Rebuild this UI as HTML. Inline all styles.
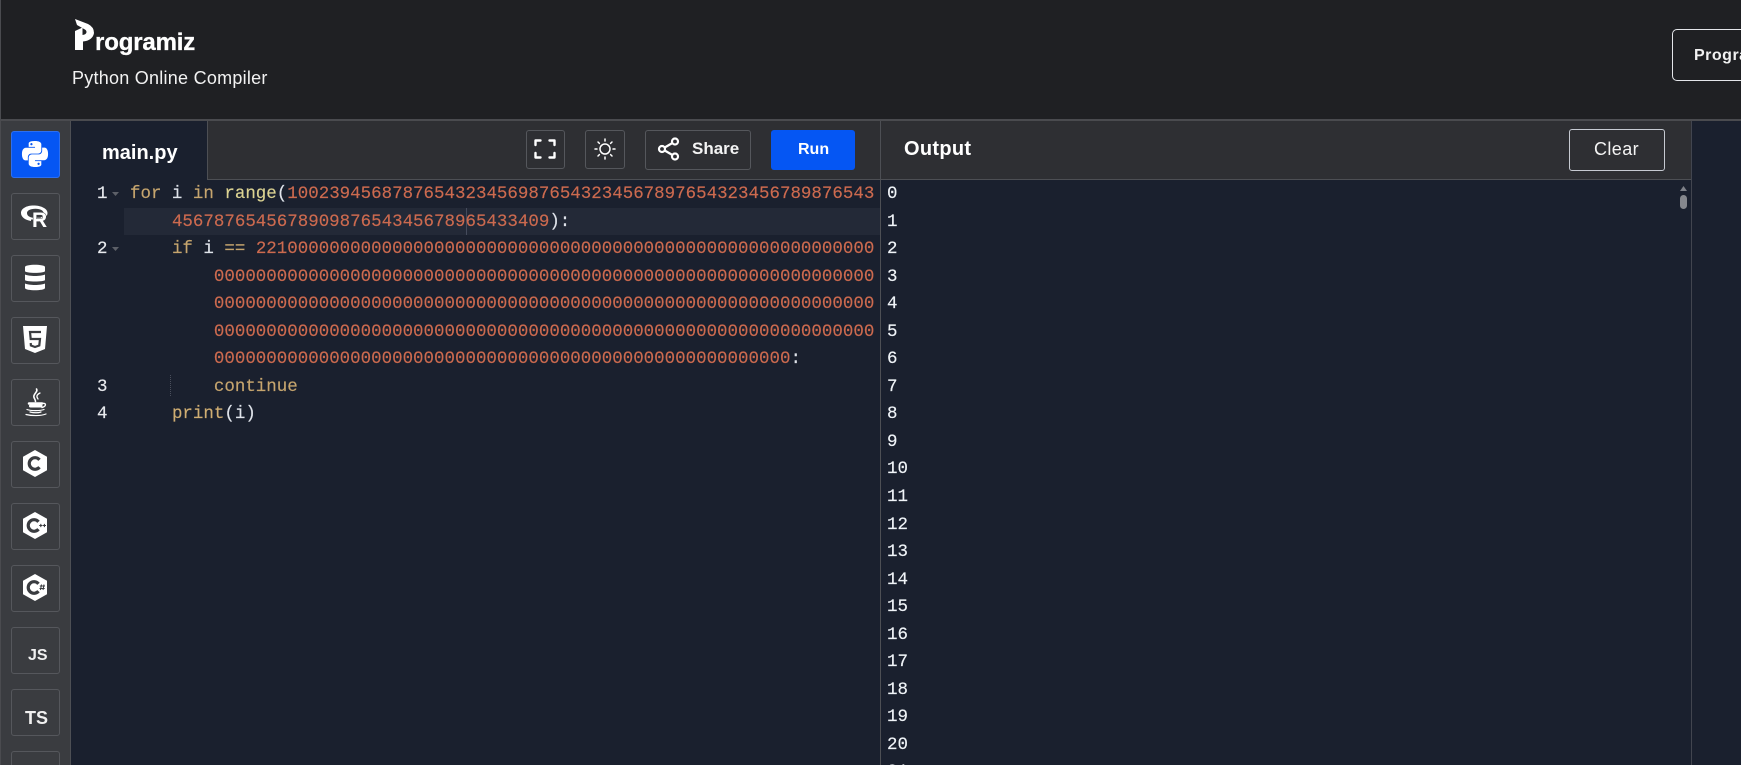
<!DOCTYPE html>
<html lang="en"><head><meta charset="utf-8"><title>Python Online Compiler</title>
<style>
html,body{margin:0;padding:0;width:1741px;height:765px;overflow:hidden;background:#1a202e}
*{box-sizing:border-box}
body{position:relative;font-family:"Liberation Sans",sans-serif;color:#fff}
.a{position:absolute}
.t{position:absolute;white-space:pre}
.tile{position:absolute;left:11px;width:49px;height:47px;border:1px solid #55575c;border-radius:3px}
.btn{position:absolute;border:1px solid #55575c;border-radius:3px}
pre{margin:0;position:absolute;font-family:"Liberation Mono",monospace;font-size:17.48px;line-height:27.55px;white-space:pre;-webkit-text-stroke:.15px}
.k{color:#c6a56e}.f{color:#dcd392}.n{color:#cc6a4f}.w{color:#dfe3ea}.p{color:#cfad72}
svg{position:absolute;overflow:visible}
</style></head><body>

<!-- header -->
<div class="a" style="left:0;top:0;width:1741px;height:119px;background:#1f2023"></div>
<div class="a" style="left:0;top:119px;width:1741px;height:2px;background:#4a4b4f"></div>
<div class="a" style="left:0;top:0;width:1px;height:765px;background:#4a4b4f"></div>
<svg style="left:0;top:0" width="100" height="60"><path fill="#fff" d="M75 19L88 24Q94 27 94 33Q93 39 86 41L83 41.500V50H75V31L82.500 27.500V35Q86.500 34.500 86.500 32Q86.500 30 84 29L77 25Z"/></svg>
<div class="t" style="left:95px;top:26px;font-size:24px;font-weight:bold;line-height:34px;letter-spacing:-.15px;-webkit-text-stroke:.3px #fff">rogramiz</div>
<div class="t" style="left:72px;top:67px;font-size:18px;line-height:22px;letter-spacing:.25px;color:#f2f2f2">Python Online Compiler</div>
<div class="a" style="left:1672px;top:29px;width:90px;height:52px;border:1px solid #e4e6ea;border-radius:5px"></div>
<div class="t" style="left:1694px;top:46px;font-size:16px;font-weight:bold;line-height:20px;letter-spacing:.5px;color:#f2f2f2">Programiz PRO</div>

<!-- sidebar -->
<div class="a" style="left:1px;top:121px;width:70px;height:644px;background:#3a3c40;border-right:1px solid #4d4f54"></div>
<div class="tile" style="top:131px;background:#0556f3;border-color:#2d6ff0"></div>
<div class="tile" style="top:193px"></div>
<div class="tile" style="top:255px"></div>
<div class="tile" style="top:317px"></div>
<div class="tile" style="top:379px"></div>
<div class="tile" style="top:441px"></div>
<div class="tile" style="top:503px"></div>
<div class="tile" style="top:565px"></div>
<div class="tile" style="top:627px"></div>
<div class="tile" style="top:689px"></div>
<div class="tile" style="top:751px"></div>

<!-- python -->
<svg style="left:22px;top:141px" width="26" height="26" viewBox="0 0 24 24" preserveAspectRatio="none"><path fill="#fff" fill-rule="evenodd" d="M14.25.18l.9.2.73.26.59.3.45.32.34.34.25.34.16.33.1.3.04.26.02.2-.01.13V8.5l-.05.63-.13.55-.21.46-.26.38-.3.31-.33.25-.35.19-.35.14-.33.1-.3.07-.26.04-.21.02H8.77l-.69.05-.59.14-.5.22-.41.27-.33.32-.27.35-.2.36-.15.37-.1.35-.07.32-.04.27-.02.21v3.06H3.17l-.21-.03-.28-.07-.32-.12-.35-.18-.36-.26-.36-.36-.35-.46-.32-.59-.28-.73-.21-.88-.14-1.05-.05-1.23.06-1.22.16-1.04.24-.87.32-.71.36-.57.4-.44.42-.33.42-.24.4-.16.36-.1.32-.05.24-.01h.16l.06.01h8.16v-.83H6.18l-.01-2.75-.02-.37.05-.34.11-.31.17-.28.25-.26.31-.23.38-.2.44-.18.51-.15.58-.12.64-.1.71-.06.77-.04.84-.02 1.27.05zm-6.3 1.98l-.23.33-.08.41.08.41.23.34.33.22.41.09.41-.09.33-.22.23-.34.08-.41-.08-.41-.23-.33-.33-.22-.41-.09-.41.09zm13.09 3.95l.28.06.32.12.35.18.36.27.36.35.35.47.32.59.28.73.21.88.14 1.04.05 1.23-.06 1.23-.16 1.04-.24.86-.32.71-.36.57-.4.45-.42.33-.42.24-.4.16-.36.09-.32.05-.24.02-.16-.01h-8.22v.82h5.84l.01 2.76.02.36-.05.34-.11.31-.17.29-.25.25-.31.24-.38.2-.44.17-.51.15-.58.13-.64.09-.71.07-.77.04-.84.01-1.27-.04-1.07-.14-.9-.2-.73-.25-.59-.3-.45-.33-.34-.34-.25-.34-.16-.33-.1-.3-.04-.25-.02-.2.01-.13v-5.34l.05-.64.13-.54.21-.46.26-.38.3-.32.33-.24.35-.2.35-.14.33-.1.3-.06.26-.04.21-.02.13-.01h5.84l.69-.05.59-.14.5-.21.41-.28.33-.32.27-.35.2-.36.15-.36.1-.35.07-.32.04-.28.02-.21V6.07h2.09l.14.01zm-6.47 14.25l-.23.33-.08.41.08.41.23.33.33.23.41.08.41-.08.33-.23.23-.33.08-.41-.08-.41-.23-.33-.33-.23-.41-.08-.41.08z"/></svg>

<!-- R -->
<svg style="left:0;top:0" width="70" height="240"><path fill="#fff" fill-rule="evenodd" d="M33.500 205.500C41 205.500 47.500 208.500 47.500 213C47.500 216 45 218 42 219.500H31V221C25 220 21 217 21 213C21 208.500 26.500 205.500 33.500 205.500ZM35.500 208.700C30 208.700 27 210.500 27 213C27 215.500 29 217.200 33 217.800H40.500C42.500 216.800 43.500 215 43.500 213C43.500 210.500 40.500 208.700 35.500 208.700Z"/><text x="32" y="227" font-family="Liberation Sans" font-weight="bold" font-size="21" fill="#fff" stroke="#3a3c40" stroke-width="1" paint-order="stroke">R</text></svg>

<!-- DB -->
<svg style="left:25px;top:264px" width="20" height="27"><g fill="#fff"><path d="M0 3C0 0 20 0 20 3V7C20 9.500 0 9.500 0 7Z"/><path d="M0 10.500C4 12.500 16 12.500 20 10.500V16C20 18 0 18 0 16Z"/><path d="M0 19.500C4 21.500 16 21.500 20 19.500V24C20 27 0 27 0 24Z"/></g></svg>

<!-- HTML5 -->
<svg style="left:23px;top:326px" width="24" height="27" viewBox="0 0 24 27"><path fill="#fff" d="M0 0H24L22 23L12 27L2 23Z"/><path fill="none" stroke="#3a3c40" stroke-width="2.200" d="M18 6H7L7.700 13H17L16.300 19.500L12 21L7.900 19.500L7.700 17"/></svg>

<!-- Java -->
<svg style="left:24px;top:389px" width="24" height="27" viewBox="0 0 24 27"><g fill="none" stroke="#fff" stroke-linecap="round"><path stroke-width="1.600" d="M12.500 0C14.500 3 8.500 5 10 8.500C10.500 9.700 11.500 11 11.500 12.500"/><path stroke-width="1.300" d="M16 4C12 6 12.500 8 14 10"/><path stroke-width="2.500" d="M5 14.500H18"/><path stroke-width="3" d="M6.500 17H17"/><path stroke-width="1.400" d="M18.500 14.500C22 13.500 23 17 18 18.500"/><path stroke-width="1.200" d="M3 20.500C7 22 16 22 20 20.500"/><path stroke-width="1.200" d="M6 23C10 24 14 24 17 23"/><path stroke-width="1.200" d="M2 25.500C8 27 17 27 22 25"/></g></svg>

<!-- C family -->
<svg style="left:23px;top:450px" width="24" height="27" viewBox="0 0 24 27"><path fill="#fff" d="M12 0L24 6.750V20.250L12 27L0 20.250V6.750Z"/><path fill="none" stroke="#3a3c40" stroke-width="3.200" d="M16.500 9.800A5.800 5.800 0 1 0 16.500 17.200"/></svg>
<svg style="left:23px;top:512px" width="24" height="27" viewBox="0 0 24 27"><path fill="#fff" d="M12 0L24 6.750V20.250L12 27L0 20.250V6.750Z"/><path fill="none" stroke="#3a3c40" stroke-width="3.200" d="M15.500 9.800A5.800 5.800 0 1 0 15.500 17.200"/><path stroke="#3a3c40" stroke-width="1.100" d="M16.200 13.500H19.400M17.800 11.900V15.100M19.800 13.500H23M21.400 11.900V15.100"/></svg>
<svg style="left:23px;top:574px" width="24" height="27" viewBox="0 0 24 27"><path fill="#fff" d="M12 0L24 6.750V20.250L12 27L0 20.250V6.750Z"/><path fill="none" stroke="#3a3c40" stroke-width="3.200" d="M15.500 9.800A5.800 5.800 0 1 0 15.500 17.200"/><path stroke="#3a3c40" stroke-width="1" d="M18.500 10.500L17.500 16M21 10.500L20 16M16.800 12H22M16.500 14.500H21.700"/></svg>

<div class="t" style="left:28px;top:646px;font-size:16px;font-weight:bold;line-height:20px;color:#f0f0f0">JS</div>
<div class="t" style="left:25px;top:708px;font-size:18px;font-weight:bold;line-height:20px;color:#f0f0f0">TS</div>

<!-- tab bar -->
<div class="a" style="left:71px;top:121px;width:1620px;height:59px;background:#2e2f33;border-bottom:1px solid #4d4f54"></div>
<div class="a" style="left:71px;top:121px;width:137px;height:59px;background:#1a202e;border-right:1px solid #4d4f54"></div>
<div class="t" style="left:102px;top:141px;font-size:20px;font-weight:bold;line-height:24px">main.py</div>

<div class="btn" style="left:526px;top:130px;width:39px;height:39px"></div>
<svg style="left:534px;top:139px" width="22" height="20" fill="none" stroke="#fff" stroke-width="2.400" stroke-linecap="round" stroke-linejoin="round"><path d="M1.500 6V1.500H6.500M15.500 1.500H20.500V6M20.500 14V18.500H15.500M6.500 18.500H1.500V14"/></svg>

<div class="btn" style="left:585px;top:130px;width:40px;height:39px"></div>
<svg style="left:594px;top:138px" width="22" height="22" fill="none" stroke="#fff" stroke-width="1.500" stroke-linecap="round"><circle cx="11" cy="11" r="5"/><path d="M11 1V3M11 19V21M1 11H3M19 11H21M4 4L5.400 5.400M16.600 16.600L18 18M4 18L5.400 16.600M16.600 5.400L18 4"/></svg>

<div class="btn" style="left:645px;top:130px;width:106px;height:40px"></div>
<svg style="left:657px;top:137px" width="24" height="24" fill="none" stroke="#fff" stroke-width="2.200"><circle cx="5" cy="12" r="3"/><circle cx="18" cy="4.500" r="3"/><circle cx="18" cy="19.500" r="3"/><path d="M7.700 10.500L15.400 6M7.700 13.500L15.400 18"/></svg>
<div class="t" style="left:692px;top:139px;font-size:17px;font-weight:bold;line-height:20px;color:#f4f4f4">Share</div>

<div class="a" style="left:771px;top:130px;width:84px;height:40px;background:#0556f3;border-radius:3px"></div>
<div class="t" style="left:798px;top:140px;font-size:16px;font-weight:bold;line-height:20px">Run</div>

<div class="a" style="left:880px;top:121px;width:1px;height:644px;background:#4d4f54"></div>
<div class="t" style="left:904px;top:137px;font-size:20px;font-weight:bold;line-height:24px;letter-spacing:.3px">Output</div>
<div class="a" style="left:1569px;top:129px;width:96px;height:42px;border:1px solid #c6cad2;border-radius:3px"></div>
<div class="t" style="left:1594px;top:138px;font-size:18px;line-height:22px;letter-spacing:.4px;color:#f4f4f4">Clear</div>
<div class="a" style="left:1691px;top:121px;width:1px;height:644px;background:#42454f"></div>

<!-- editor -->
<div class="a" style="left:124px;top:208px;width:756px;height:27px;background:#232937"></div>
<div class="a" style="left:466px;top:208px;width:1px;height:27px;background:#454b5c"></div>
<div class="a" style="left:170px;top:375px;width:0;height:21px;border-left:1px dotted #4a4f5c"></div>

<pre style="left:97px;top:181px;color:#e8eaee">1

2




3
4</pre>
<svg style="left:112px;top:192px" width="8" height="5"><path fill="#5d6068" d="M0 0H7L3.500 4Z"/></svg>
<svg style="left:112px;top:247px" width="8" height="5"><path fill="#5d6068" d="M0 0H7L3.500 4Z"/></svg>

<pre style="left:130px;top:181px;color:#dfe3ea"><span class="k">for</span> i <span class="k">in</span> <span class="f">range</span>(<span class="n">10023945687876543234569876543234567897654323456789876543</span>
    <span class="n">456787654567890987654345678965433409</span>):
    <span class="k">if</span> i <span class="k">==</span> <span class="n">22100000000000000000000000000000000000000000000000000000000</span>
        <span class="n">000000000000000000000000000000000000000000000000000000000000000</span>
        <span class="n">000000000000000000000000000000000000000000000000000000000000000</span>
        <span class="n">000000000000000000000000000000000000000000000000000000000000000</span>
        <span class="n">0000000000000000000000000000000000000000000000000000000</span>:
        <span class="k">continue</span>
    <span class="p">print</span>(i)</pre>

<!-- output -->
<pre style="left:887px;top:181px;color:#f0f4f8">0
1
2
3
4
5
6
7
8
9
10
11
12
13
14
15
16
17
18
19
20
21</pre>

<svg style="left:1680px;top:186px" width="8" height="6"><path fill="#7d8088" d="M0 5L3.500 0L7 5Z"/></svg>
<div class="a" style="left:1680px;top:195px;width:7px;height:14px;background:#85878d;border-radius:3.500px"></div>

</body></html>
